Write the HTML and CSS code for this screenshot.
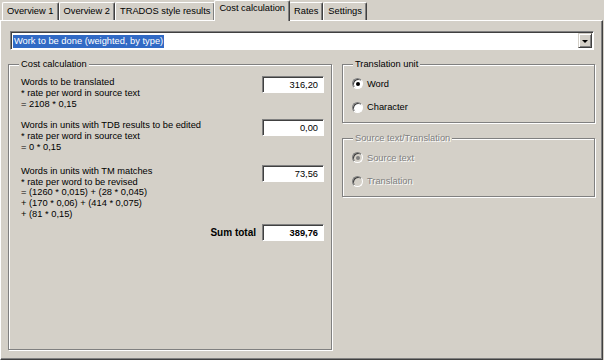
FILE: index.html
```html
<!DOCTYPE html>
<html lang="en">
<head>
    <meta charset="UTF-8">
    <title>Cost calculation</title>
    <link rel="stylesheet" href="styles.css">
</head>
<body>
    <div class="tabs">
        <div class="tab">Overview 1</div>
        <div class="tab">Overview 2</div>
        <div class="tab">TRADOS style results</div>
        <div class="tab active">Cost calculation</div>
        <div class="tab">Rates</div>
        <div class="tab">Settings</div>
    </div>

    <div class="panel">
        <div class="combo">
            <span class="combo-text"><span class="selected">Work to be done (weighted, by type)</span></span>
            <span class="drop"><span class="arrow"></span></span>
        </div>

        <div class="columns">
            <fieldset class="group cost">
                <legend>Cost calculation</legend>
                <div class="group-body">
                    <div class="calc-row">
                        <div class="calc-text">
                            Words to be translated<br>
                            * rate per word in source text<br>
                            = 2108 * 0,15
                        </div>
                        <div class="field">316,20</div>
                    </div>
                    <div class="calc-row">
                        <div class="calc-text">
                            Words in units with TDB results to be edited<br>
                            * rate per word in source text<br>
                            = 0 * 0,15
                        </div>
                        <div class="field">0,00</div>
                    </div>
                    <div class="calc-row last">
                        <div class="calc-text">
                            Words in units with TM matches<br>
                            * rate per word to be revised<br>
                            = (1260 * 0,015) + (28 * 0,045)<br>
                            + (170 * 0,06) + (414 * 0,075)<br>
                            + (81 * 0,15)
                        </div>
                        <div class="field">73,56</div>
                    </div>
                    <div class="sum-row">
                        <span class="sum-label">Sum total</span>
                        <div class="field bold">389,76</div>
                    </div>
                </div>
            </fieldset>

            <div class="side">
                <fieldset class="group">
                    <legend>Translation unit</legend>
                    <div class="options">
                        <div class="option"><span class="radio checked"></span>Word</div>
                        <div class="option"><span class="radio"></span>Character</div>
                    </div>
                </fieldset>
                <fieldset class="group disabled">
                    <legend>Source text/Translation</legend>
                    <div class="options">
                        <div class="option"><span class="radio checked"></span>Source text</div>
                        <div class="option"><span class="radio"></span>Translation</div>
                    </div>
                </fieldset>
            </div>
        </div>
    </div>
</body>
</html>
```

FILE: styles.css
```css
body { margin: 0; background: #d4d0c8; font-family: "Liberation Sans", Arial, sans-serif; font-size: 9.3px; color: #000; }

.tabs { display: flex; align-items: flex-end; height: 20px; padding-left: 2px; }
.tab { height: 18px; box-sizing: border-box; padding: 3px 4px 0 4px; border-top: 1px solid #fff; border-left: 1px solid #fff; border-right: 1px solid #404040; box-shadow: inset -1px 0 0 #808080; border-radius: 2px 2px 0 0; white-space: nowrap; }
.tab.active { height: 21px; padding: 2px 4px 0 4px; margin: 0 -1px -1px -1px; background: #d4d0c8; position: relative; z-index: 1; }

.panel { height: 340px; box-sizing: border-box; margin-right: 1px; border-top: 1px solid #fff; border-left: 1px solid #fff; border-right: 1px solid #404040; border-bottom: 1px solid #404040; box-shadow: inset -1px -1px 0 #808080; padding: 10px 6px 0 7px; }

.combo { display: flex; align-items: center; height: 19px; box-sizing: border-box; margin: 0 2px 0 2px; background: #fff; border: 1px solid; border-color: #808080 #fff #fff #808080; box-shadow: inset 1px 1px 0 #404040; padding: 1px 1px 1px 2px; }
.combo-text { flex: 1; }
.selected { background: #316ac5; color: #fff; padding: 1px 1px 2px 1px; }
.drop { width: 14px; height: 15px; box-sizing: border-box; background: #d4d0c8; border: 1px solid; border-color: #d4d0c8 #404040 #404040 #d4d0c8; box-shadow: inset 1px 1px 0 #fff, inset -1px -1px 0 #808080; display: flex; align-items: center; justify-content: center; }
.arrow { width: 0; height: 0; border-left: 3px solid transparent; border-right: 3px solid transparent; border-top: 3px solid #000; margin-top: 1px; }

.columns { display: flex; gap: 10px; margin-top: 9px; }

.group { margin: 0; padding: 0; border: 1px solid #808080; box-shadow: 1px 1px 0 #fff, inset 1px 1px 0 #fff; min-width: 0; }
.group legend { margin-left: 10px; padding: 0 2px; line-height: 11px; background: #d4d0c8; }
.group.cost { width: 324px; height: 291px; box-sizing: border-box; }
.group-body { padding: 7px 7px 0 12px; }

.calc-row { display: flex; justify-content: space-between; align-items: flex-start; margin-bottom: 11px; }
.calc-row.last { margin-top: 13px; margin-bottom: 4px; }
.calc-text { line-height: 10.8px; }
.field { width: 62px; height: 17px; box-sizing: border-box; background: #fff; border: 1px solid; border-color: #808080 #fff #fff #808080; box-shadow: inset 1px 1px 0 #404040; text-align: right; padding: 3px 5px 0 0; margin-top: -1px; }
.field.bold { font-weight: bold; }
.sum-row { display: flex; justify-content: flex-end; align-items: center; gap: 6px; }
.sum-row .field { margin-top: 0; }
.sum-label { font-weight: bold; font-size: 10px; }

.side { width: 253px; display: flex; flex-direction: column; gap: 10px; }
.options { padding: 2px 0 3px 9px; }
.option { display: flex; align-items: center; gap: 4px; height: 23.5px; }
.radio { width: 11px; height: 11px; box-sizing: border-box; border-radius: 50%; background: #fff; border: 1px solid; border-color: #808080 #fff #fff #808080; box-shadow: inset 1px 1px 0 #404040; display: flex; align-items: center; justify-content: center; }
.radio.checked::after { content: ""; width: 4px; height: 4px; border-radius: 50%; background: #000; }

.group.disabled legend, .group.disabled .option { color: #808080; text-shadow: 1px 1px 0 #fff; }
.group.disabled .radio { background: #d4d0c8; }
.group.disabled .radio.checked::after { background: #808080; }
```
